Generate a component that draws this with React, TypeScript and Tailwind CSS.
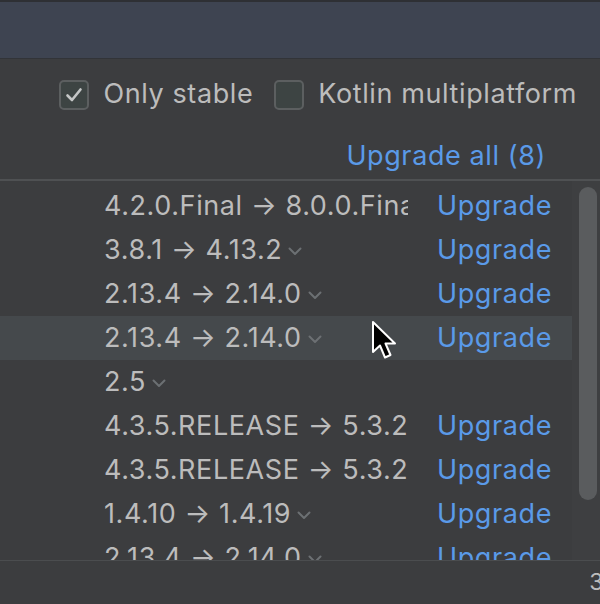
import { FC } from 'react';

type Row = { version: string; chevron?: boolean; upgrade?: boolean; active?: boolean };

const rows: Row[] = [
  { version: '4.2.0.Final → 8.0.0.Final', upgrade: true },
  { version: '3.8.1 → 4.13.2', chevron: true, upgrade: true },
  { version: '2.13.4 → 2.14.0', chevron: true, upgrade: true },
  { version: '2.13.4 → 2.14.0', chevron: true, upgrade: true, active: true },
  { version: '2.5', chevron: true },
  { version: '4.3.5.RELEASE → 5.3.20', upgrade: true },
  { version: '4.3.5.RELEASE → 5.3.20', upgrade: true },
  { version: '1.4.10 → 1.4.19', chevron: true, upgrade: true },
  { version: '2.13.4 → 2.14.0', chevron: true, upgrade: true },
];

const Chevron: FC = () => (
  <svg width="14" height="9" viewBox="0 0 14 9" className="ml-[6px] mt-[3px] shrink-0">
    <path d="M1.5 1.5 L7 7 L12.5 1.5" fill="none" stroke="#6c7073" strokeWidth="2" strokeLinecap="round" strokeLinejoin="round" />
  </svg>
);

const Checkbox: FC<{ checked?: boolean; label: string }> = ({ checked, label }) => (
  <label className="flex items-center gap-[14px]">
    <span className="w-[30px] h-[30px] rounded-[5px] border-2 border-[#5c5f60] bg-[#3d4443] flex items-center justify-center">
      {checked && (
        <svg width="18" height="16" viewBox="0 0 18 16">
          <path d="M2.5 8.5 L7 13 L15.5 2.5" fill="none" stroke="#c4c6c6" strokeWidth="2.6" strokeLinecap="round" strokeLinejoin="round" />
        </svg>
      )}
    </span>
    <span>{label}</span>
  </label>
);

const Cursor: FC = () => (
  <svg width="28" height="42" viewBox="0 0 28 42" className="absolute left-[371px] top-[320px]">
    <path d="M2 2 L2 32 L9 25.5 L14 37.5 L19.5 35 L14.5 23.5 L24 23.5 Z" fill="#000" stroke="#fff" strokeWidth="2" strokeLinejoin="round" />
  </svg>
);

export default function App() {
  return (
    <div className="relative w-[600px] h-[604px] flex flex-col overflow-hidden bg-[#3c3d3f] text-[#bcbcbc] text-[27px] tracking-[0.6px] font-['Inter','Noto_Sans',sans-serif]">
      <div className="h-[59px] shrink-0 bg-[#3e4451] border-t-2 border-t-[#2e3034] border-b border-b-[#323438]" />
      <div className="h-[71px] shrink-0 flex items-center justify-end gap-[21px] pr-[23px]">
        <Checkbox checked label="Only stable" />
        <Checkbox label="Kotlin multiplatform" />
      </div>
      <div className="h-[49px] shrink-0 flex items-center justify-end pr-[54px] pt-[3px]">
        <span className="text-[#5a9ae8]">Upgrade all (8)</span>
      </div>
      <div className="h-[2px] shrink-0 bg-[#4f5153]" />
      <div className="flex-1 flex min-h-0 overflow-hidden">
        <div className="flex-1 pt-[3px]">
          {rows.map((row, i) => (
            <div key={i} className={`h-[44px] flex items-center pl-[104px] ${row.active ? 'bg-[#45494c]' : ''}`}>
              <div className="w-[304px] shrink-0 flex items-center overflow-hidden whitespace-nowrap">
                <span>{row.version}</span>
                {row.chevron && <Chevron />}
              </div>
              {row.upgrade && <span className="ml-[29px] text-[#5a9ae8]">Upgrade</span>}
            </div>
          ))}
        </div>
        <div className="w-[28px] shrink-0 bg-[#3e3f41] pt-[6px] pl-[7px]">
          <div className="w-[18px] h-[313px] rounded-full bg-[#5a5c5e]" />
        </div>
      </div>
      <div className="h-[1px] shrink-0 bg-[#4b4d4f]" />
      <div className="h-[43px] shrink-0 flex items-center justify-end">
        <span className="-mr-[4px] text-[23px]">3</span>
      </div>
      <Cursor />
    </div>
  );
}
